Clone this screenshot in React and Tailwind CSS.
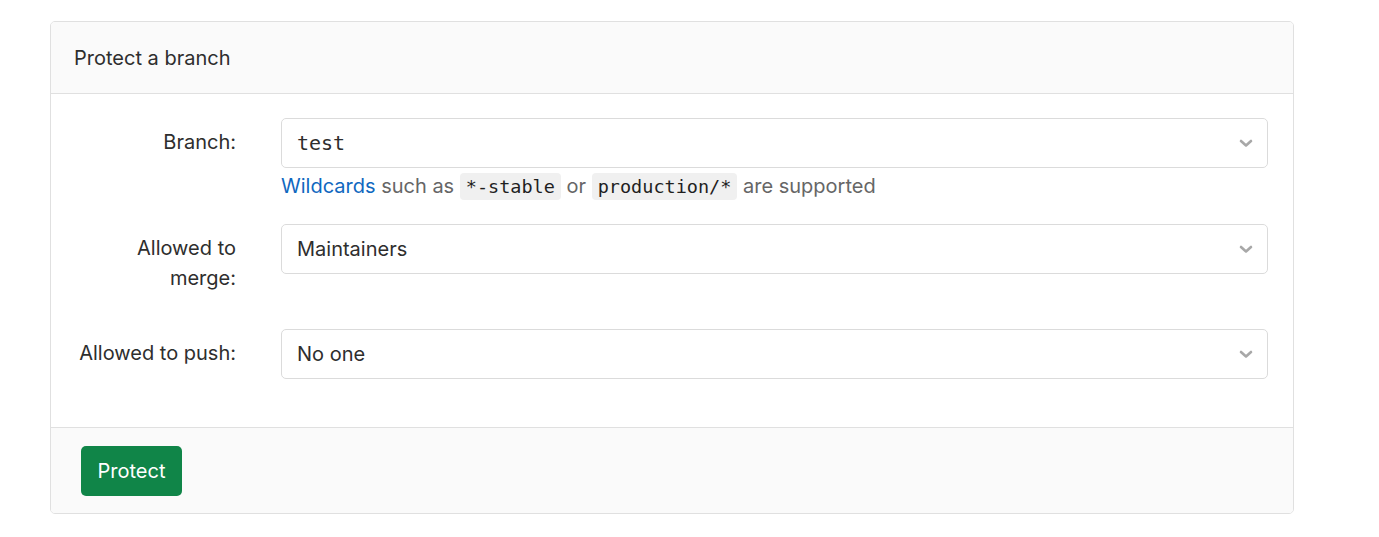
import React from "react";

const sans = { fontFamily: "Inter, 'Liberation Sans', Arial, sans-serif" };
const mono = { fontFamily: "'DejaVu Sans Mono', 'Liberation Mono', monospace" };

function Chevron() {
  return (
    <svg width="14" height="9" viewBox="0 0 14 9" className="shrink-0">
      <path d="M2 2 L7 6.5 L12 2" fill="none" stroke="#a8a8a8" strokeWidth="2.6" strokeLinecap="round" strokeLinejoin="round" />
    </svg>
  );
}

function Select({ children, monoText }) {
  return (
    <div className="flex h-[50px] items-center justify-between rounded-[5px] border border-[#dbdbdb] bg-white pl-[15px] pr-[14px]">
      <span className="text-[20px] text-[#2e2e2e]" style={monoText ? mono : sans}>{children}</span>
      <Chevron />
    </div>
  );
}

function Label({ children }) {
  return (
    <div className="w-[170px] shrink-0 pt-[9px] text-right text-[20px] leading-[30px] text-[#2e2e2e]">
      {children}
    </div>
  );
}

function Code({ children }) {
  return (
    <code className="rounded-[4px] bg-[#f0f0f0] px-[6px] py-[3px] text-[18.5px] text-[#1f1f1f]" style={mono}>
      {children}
    </code>
  );
}

export default function App() {
  return (
    <div className="min-h-[537px] w-[1379px] bg-white pt-[21px] pl-[50px]" style={sans}>
      <div className="w-[1244px] overflow-hidden rounded-[5px] border border-[#e0e0e0]">
        <div className="flex h-[72px] items-center border-b border-[#e0e0e0] bg-[#fafafa] pl-[23px] text-[20px] text-[#2e2e2e]">
          Protect a branch
        </div>
        <div className="bg-white pt-[24px] pb-[48px] pl-[15px] pr-[25px]">
          <div className="flex gap-[45px]">
            <Label>Branch:</Label>
            <div className="flex-1">
              <Select monoText>test</Select>
              <div className="mt-[3px] text-[20px] leading-[30px] text-[#666666]">
                <span className="text-[#1068bf]">Wildcards</span> such as <Code>*-stable</Code> or <Code>production/*</Code> are supported
              </div>
            </div>
          </div>
          <div className="mt-[22px] flex gap-[45px]">
            <Label>Allowed to<br />merge:</Label>
            <div className="flex-1">
              <Select>Maintainers</Select>
            </div>
          </div>
          <div className="mt-[36px] flex gap-[45px]">
            <Label>Allowed to push:</Label>
            <div className="flex-1">
              <Select>No one</Select>
            </div>
          </div>
        </div>
        <div className="border-t border-[#e0e0e0] bg-[#fafafa] pt-[18px] pb-[17px] pl-[30px]">
          <button className="h-[50px] w-[101px] rounded-[5px] bg-[#108548] text-[20px] text-white" style={sans}>
            Protect
          </button>
        </div>
      </div>
    </div>
  );
}
